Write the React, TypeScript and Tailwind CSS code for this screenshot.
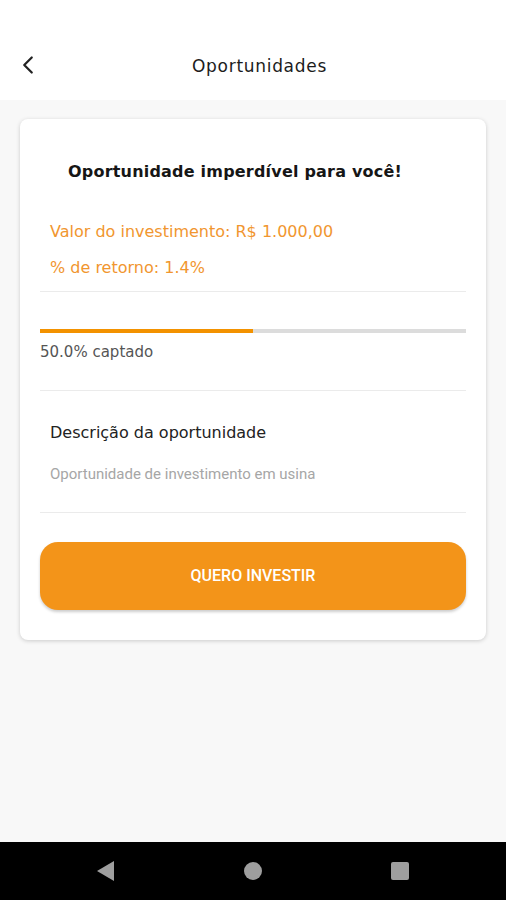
import { ChevronLeft } from "lucide-react";

const tech = { fontFamily: '"DejaVu Sans", "Liberation Sans", sans-serif' };
const roboto = { fontFamily: 'Roboto, "Liberation Sans", sans-serif' };

function Divider() {
  return <div className="h-px bg-[#ebebeb]" />;
}

export default function App() {
  const captado = 50;
  return (
    <div className="flex h-[900px] w-[506px] flex-col bg-[#f8f8f8]" style={roboto}>
      <header className="relative flex h-[100px] items-center justify-center bg-white">
        <button className="absolute left-[13px] top-[50px] text-[#222]">
          <ChevronLeft size={30} strokeWidth={1.8} />
        </button>
        <h1
          className="ml-[13px] pt-[34px] text-[17px] font-medium tracking-[0.7px] text-[#1c1c1c]"
          style={tech}
        >
          Oportunidades
        </h1>
      </header>

      <main className="flex-1 px-[20px] pt-[19px]">
        <div className="rounded-[8px] bg-white px-[20px] pb-[30px] shadow-[0_1px_4px_rgba(0,0,0,0.18)]">
          <h2
            className="pl-[28px] pt-[41px] text-[16px] font-semibold tracking-[0.2px] text-[#161616]"
            style={tech}
          >
            Oportunidade imperdível para você!
          </h2>

          <div className="space-y-[12px] pl-[10px] pt-[36px] text-[16px] text-[#f1962f]" style={tech}>
            <p>Valor do investimento: R$ 1.000,00</p>
            <p>% de retorno: 1.4%</p>
          </div>

          <div className="mt-[11px]">
            <Divider />
          </div>

          <div className="pt-[37px]">
            <div className="h-[4px] w-full bg-[#dcdcdc]">
              <div className="h-full bg-[#f39200]" style={{ width: `${captado}%` }} />
            </div>
            <p className="pt-[8px] text-[15px] font-medium text-[#555]" style={tech}>
              {captado.toFixed(1)}% captado
            </p>
          </div>

          <div className="mt-[26px]">
            <Divider />
          </div>

          <div className="pl-[10px] pt-[30px]">
            <p className="text-[16px] text-[#222]" style={tech}>
              Descrição da oportunidade
            </p>
            <p className="pt-[18px] text-[15px] text-[#a6a6a6]">Oportunidade de investimento em usina</p>
          </div>

          <div className="mt-[27px]">
            <Divider />
          </div>

          <button className="mt-[29px] flex h-[68px] w-full items-center justify-center rounded-[18px] bg-[#f39419] text-[16px] font-medium text-white shadow-[0_2px_3px_rgba(0,0,0,0.2)]">
            QUERO INVESTIR
          </button>
        </div>
      </main>

      <nav className="flex h-[58px] items-center justify-center gap-[127px] bg-black">
        <svg width="20" height="22" viewBox="0 0 20 22">
          <path d="M18 1 L18 21 L1 11 Z" fill="#9e9e9e" />
        </svg>
        <svg width="20" height="20" viewBox="0 0 20 20">
          <circle cx="10" cy="10" r="9" fill="#9e9e9e" />
        </svg>
        <svg width="20" height="20" viewBox="0 0 20 20">
          <rect x="1" y="1" width="18" height="18" rx="2" fill="#9e9e9e" />
        </svg>
      </nav>
    </div>
  );
}
